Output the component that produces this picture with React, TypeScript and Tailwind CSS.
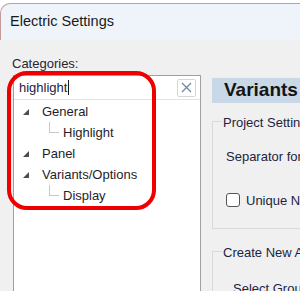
import React from "react";

const font = { fontFamily: '"Liberation Sans", Arial, sans-serif' };

const Arrow = () => (
  <svg width="6" height="6" viewBox="0 0 6 6" className="shrink-0">
    <polygon points="6,0 6,6 0,6" fill="#4d4d4d" />
  </svg>
);

const TreeRow = ({
  label,
  level,
}: {
  label: string;
  level: 0 | 1;
}) => (
  <div className="flex items-center h-[21px] text-[13px] text-[#1e1e28]">
    {level === 0 ? (
      <>
        <div className="w-[28px] pl-[9px] flex items-center">
          <Arrow />
        </div>
        <span>{label}</span>
      </>
    ) : (
      <>
        <div className="w-[49px] h-full relative">
          <div className="absolute left-[35px] top-0 h-[11px] w-[10px] border-l border-b border-[#c8c8c8]" />
        </div>
        <span>{label}</span>
      </>
    )}
  </div>
);

export default function App() {
  return (
    <div
      className="w-[300px] h-[291px] overflow-hidden bg-[#f0f0f0] relative flex flex-col"
      style={font}
    >
      {/* title bar */}
      <div className="h-[40px] shrink-0 bg-white pt-[3px]">
        <div className="h-full bg-[#eef4f9] border-t border-l border-[#c89a9a] rounded-tl-[10px] flex items-center pl-[9px] text-[14.5px] text-[#1a1a1a]">
          Electric Settings
        </div>
      </div>

      <div className="flex flex-1 min-h-0">
        {/* left column */}
        <div className="w-[201px] shrink-0 flex flex-col pl-[13px] pt-[14px]">
          <div className="text-[13px] text-[#262630] h-[21px] -ml-[1px]">Categories:</div>
          <div className="flex-1 bg-white border border-[#a0a0a0] border-b-0 flex flex-col">
            <div className="h-[24px] flex items-center justify-between border-b border-[#e3e3e3] pl-[5px] pr-[4px]">
              <span className="text-[13px] text-[#1c2440] flex items-center">
                highlight<span className="w-px h-[15px] bg-[#1a1a1a] ml-[1px]" />
              </span>
              <div className="w-[19px] h-[18px] border border-[#d6d6d6] rounded-[2px] flex items-center justify-center">
                <svg width="11" height="11" viewBox="0 0 11 11">
                  <path d="M1 1 L10 10 M10 1 L1 10" stroke="#6f87a8" strokeWidth="1.3" />
                </svg>
              </div>
            </div>
            <div className="pt-[1px]">
              <TreeRow label="General" level={0} />
              <TreeRow label="Highlight" level={1} />
              <TreeRow label="Panel" level={0} />
              <TreeRow label="Variants/Options" level={0} />
              <TreeRow label="Display" level={1} />
            </div>
          </div>
        </div>

        {/* right column */}
        <div className="flex-1 pl-[11px] pt-[38px] flex flex-col">
          <div className="h-[25px] bg-[#c9d8e6] flex items-center pl-[12px] text-[19px] font-bold text-[#141414] whitespace-nowrap">
            Variants
          </div>
          <div className="mt-[18px] h-[108px] border border-r-0 border-[#d9d9d9] relative shrink-0">
            <div className="absolute -top-[9px] left-[9px] bg-[#f0f0f0] px-[1px] text-[13px] text-[#1c2440] whitespace-nowrap">
              Project Settings
            </div>
            <div className="pl-[13px] pt-[25px] text-[13px] text-[#1c2440] whitespace-nowrap">
              Separator for
            </div>
            <div className="pl-[13px] pt-[24px] flex items-center gap-[6px] text-[13px] text-[#1c2440] whitespace-nowrap">
              <div className="w-[14px] h-[14px] border border-[#555] rounded-[3px] bg-white" />
              Unique Names
            </div>
          </div>
          <div className="mt-[22px] flex-1 border border-r-0 border-b-0 border-[#d9d9d9] relative">
            <div className="absolute -top-[9px] left-[9px] bg-[#f0f0f0] px-[1px] text-[13px] text-[#1c2440] whitespace-nowrap">
              Create New Assignment
            </div>
            <div className="pl-[20px] pt-[27px] text-[13px] text-[#1c2440] whitespace-nowrap">
              Select Group
            </div>
          </div>
        </div>
      </div>

      {/* red annotation */}
      <div className="absolute left-[7px] top-[71px] w-[149px] h-[139px] border-[4px] border-[#ee0000] rounded-[20px] pointer-events-none" />
    </div>
  );
}
